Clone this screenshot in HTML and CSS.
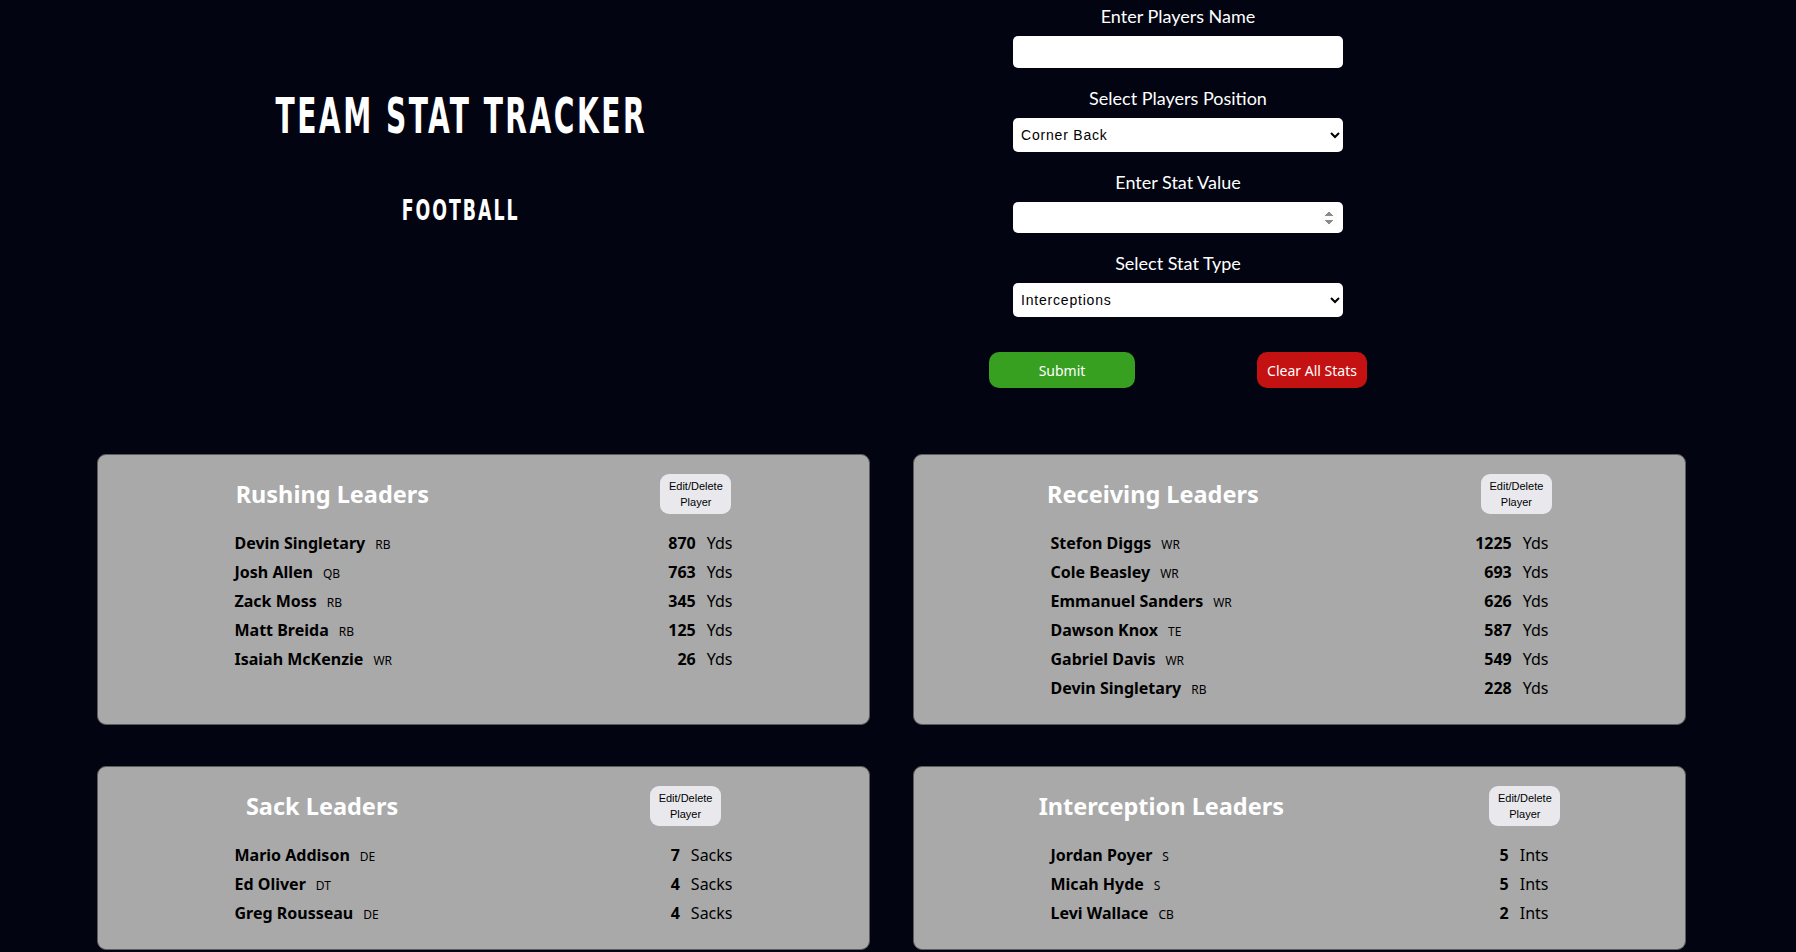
FILE: index.html
```html
<!DOCTYPE html>
<html lang="en">
<head>
<meta charset="utf-8">
<title>Team Stat Tracker</title>
<link rel="stylesheet" href="styles.css">
</head>
<body>
<header class="top">
  <div class="brand">
    <h1 class="title"><span class="squeeze">TEAM STAT TRACKER</span></h1>
    <h2 class="sport"><span class="squeeze">FOOTBALL</span></h2>
  </div>
  <form class="entry">
    <label class="field-label" for="pname">Enter Players Name</label>
    <input class="field text" id="pname" type="text">
    <label class="field-label" for="ppos">Select Players Position</label>
    <select class="field pick" id="ppos">
      <option>Corner Back</option>
      <option>Quarterback</option>
      <option>Running Back</option>
      <option>Wide Receiver</option>
    </select>
    <label class="field-label" for="sval">Enter Stat Value</label>
    <input class="field text num" id="sval" type="number">
    <label class="field-label" for="stype">Select Stat Type</label>
    <select class="field pick" id="stype">
      <option>Interceptions</option>
      <option>Rushing Yards</option>
      <option>Receiving Yards</option>
      <option>Sacks</option>
    </select>
    <div class="actions">
      <button type="button" class="btn submit">Submit</button>
      <button type="button" class="btn clear">Clear All Stats</button>
    </div>
  </form>
</header>

<main class="boards">
  <section class="card">
    <div class="card-head">
      <h3 class="card-title">Rushing Leaders</h3>
      <button type="button" class="edit">Edit/Delete Player</button>
    </div>
    <ul class="rows">
      <li class="row"><span class="who"><b class="name">Devin Singletary</b><span class="pos">RB</span></span><span class="stat"><b class="val">870</b><span class="unit">Yds</span></span></li>
      <li class="row"><span class="who"><b class="name">Josh Allen</b><span class="pos">QB</span></span><span class="stat"><b class="val">763</b><span class="unit">Yds</span></span></li>
      <li class="row"><span class="who"><b class="name">Zack Moss</b><span class="pos">RB</span></span><span class="stat"><b class="val">345</b><span class="unit">Yds</span></span></li>
      <li class="row"><span class="who"><b class="name">Matt Breida</b><span class="pos">RB</span></span><span class="stat"><b class="val">125</b><span class="unit">Yds</span></span></li>
      <li class="row"><span class="who"><b class="name">Isaiah McKenzie</b><span class="pos">WR</span></span><span class="stat"><b class="val">26</b><span class="unit">Yds</span></span></li>
    </ul>
  </section>

  <section class="card">
    <div class="card-head">
      <h3 class="card-title">Receiving Leaders</h3>
      <button type="button" class="edit">Edit/Delete Player</button>
    </div>
    <ul class="rows">
      <li class="row"><span class="who"><b class="name">Stefon Diggs</b><span class="pos">WR</span></span><span class="stat"><b class="val">1225</b><span class="unit">Yds</span></span></li>
      <li class="row"><span class="who"><b class="name">Cole Beasley</b><span class="pos">WR</span></span><span class="stat"><b class="val">693</b><span class="unit">Yds</span></span></li>
      <li class="row"><span class="who"><b class="name">Emmanuel Sanders</b><span class="pos">WR</span></span><span class="stat"><b class="val">626</b><span class="unit">Yds</span></span></li>
      <li class="row"><span class="who"><b class="name">Dawson Knox</b><span class="pos">TE</span></span><span class="stat"><b class="val">587</b><span class="unit">Yds</span></span></li>
      <li class="row"><span class="who"><b class="name">Gabriel Davis</b><span class="pos">WR</span></span><span class="stat"><b class="val">549</b><span class="unit">Yds</span></span></li>
      <li class="row"><span class="who"><b class="name">Devin Singletary</b><span class="pos">RB</span></span><span class="stat"><b class="val">228</b><span class="unit">Yds</span></span></li>
    </ul>
  </section>

  <section class="card">
    <div class="card-head">
      <h3 class="card-title">Sack Leaders</h3>
      <button type="button" class="edit">Edit/Delete Player</button>
    </div>
    <ul class="rows">
      <li class="row"><span class="who"><b class="name">Mario Addison</b><span class="pos">DE</span></span><span class="stat"><b class="val">7</b><span class="unit">Sacks</span></span></li>
      <li class="row"><span class="who"><b class="name">Ed Oliver</b><span class="pos">DT</span></span><span class="stat"><b class="val">4</b><span class="unit">Sacks</span></span></li>
      <li class="row"><span class="who"><b class="name">Greg Rousseau</b><span class="pos">DE</span></span><span class="stat"><b class="val">4</b><span class="unit">Sacks</span></span></li>
    </ul>
  </section>

  <section class="card">
    <div class="card-head">
      <h3 class="card-title">Interception Leaders</h3>
      <button type="button" class="edit">Edit/Delete Player</button>
    </div>
    <ul class="rows">
      <li class="row"><span class="who"><b class="name">Jordan Poyer</b><span class="pos">S</span></span><span class="stat"><b class="val">5</b><span class="unit">Ints</span></span></li>
      <li class="row"><span class="who"><b class="name">Micah Hyde</b><span class="pos">S</span></span><span class="stat"><b class="val">5</b><span class="unit">Ints</span></span></li>
      <li class="row"><span class="who"><b class="name">Levi Wallace</b><span class="pos">CB</span></span><span class="stat"><b class="val">2</b><span class="unit">Ints</span></span></li>
    </ul>
  </section>
</main>
</body>
</html>
```

FILE: styles.css
```css
html {
  background: #020411;
}
::-webkit-scrollbar {
  width: 10px;
}
::-webkit-scrollbar-track {
  background: #0e1019;
}
::-webkit-scrollbar-thumb {
  background: #6b6e76;
}
body {
  margin: 0;
  padding-bottom: 70px;
  background: #020411;
  color: #ffffff;
  font-family: Lato, "Noto Sans", sans-serif;
}

/* ---------- top area ---------- */
.top {
  display: grid;
  grid-template-columns: 922px 500px;
  column-gap: 6px;
}
.brand {
  padding-top: 91px;
  text-align: center;
}
.title,
.sport {
  margin: 0;
  font-family: "Liberation Sans Narrow", "DejaVu Sans Condensed", "Liberation Sans", sans-serif;
  font-weight: 700;
  color: #ffffff;
}
.squeeze {
  display: inline-block;
}
.title {
  font-size: 50px;
  line-height: 50px;
  letter-spacing: 4px;
}
.title .squeeze {
  transform: scaleX(0.625);
}
.sport {
  margin-top: 55px;
  font-size: 29px;
  line-height: 29px;
  letter-spacing: 3px;
}
.sport .squeeze {
  transform: scaleX(0.665);
}

.entry {
  display: flex;
  flex-direction: column;
  align-items: center;
  padding-top: 5px;
}
.field-label {
  font-size: 18px;
  line-height: 22px;
  color: #ffffff;
  margin-bottom: 9px;
}
.field {
  width: 330px;
  box-sizing: border-box;
  border: none;
  border-radius: 5px;
  background: #ffffff;
  margin-bottom: 19px;
  font-family: "Liberation Sans", Arial, sans-serif;
  font-size: 14px;
  letter-spacing: 0.8px;
  color: #000000;
}
.text {
  height: 32px;
  padding: 0 8px;
}
.num {
  height: 31px;
  padding-right: 6px;
}
.num::-webkit-inner-spin-button {
  opacity: 1;
}
.pick {
  height: 34px;
  padding: 0 4px;
}
.actions {
  width: 500px;
  display: flex;
  justify-content: space-around;
  margin-top: 16px;
}
.btn {
  height: 36px;
  border: none;
  border-radius: 10px;
  color: #ffffff;
  font-family: "Noto Sans", sans-serif;
  font-size: 14px;
}
.submit {
  width: 146px;
  background: #37a021;
}
.clear {
  width: 110px;
  background: #c41212;
}

/* ---------- boards ---------- */
.boards {
  display: grid;
  grid-template-columns: 773px 773px;
  column-gap: 43px;
  row-gap: 41px;
  padding-left: 97px;
  margin-top: 66px;
}
.card {
  background: #a9a9a9;
  border: 1px solid #5c5c5c;
  border-radius: 9px;
  padding: 19px 22px 21px;
  font-family: "Noto Sans", sans-serif;
}
.card-head {
  display: flex;
  justify-content: space-around;
  align-items: center;
  height: 40px;
}
.card-title {
  margin: 0;
  font-size: 23.5px;
  font-weight: 700;
  color: #ffffff;
}
.edit {
  width: 71px;
  height: 40px;
  padding: 4px 6px;
  border: none;
  border-radius: 9px;
  background: #e9e9ed;
  color: #000000;
  font-family: "Liberation Sans", Arial, sans-serif;
  font-size: 11px;
  line-height: 16px;
}
.rows {
  list-style: none;
  margin: 15px auto 0;
  padding: 0;
  width: 498px;
}
.row {
  display: flex;
  justify-content: space-between;
  align-items: baseline;
  height: 29px;
  line-height: 29px;
  color: #000000;
}
.name {
  font-size: 16px;
  font-weight: 700;
}
.pos {
  font-size: 12px;
  margin-left: 10px;
}
.stat {
  display: flex;
  align-items: baseline;
  gap: 11px;
}
.val {
  font-size: 16px;
  font-weight: 700;
}
.unit {
  font-size: 16px;
}
```
